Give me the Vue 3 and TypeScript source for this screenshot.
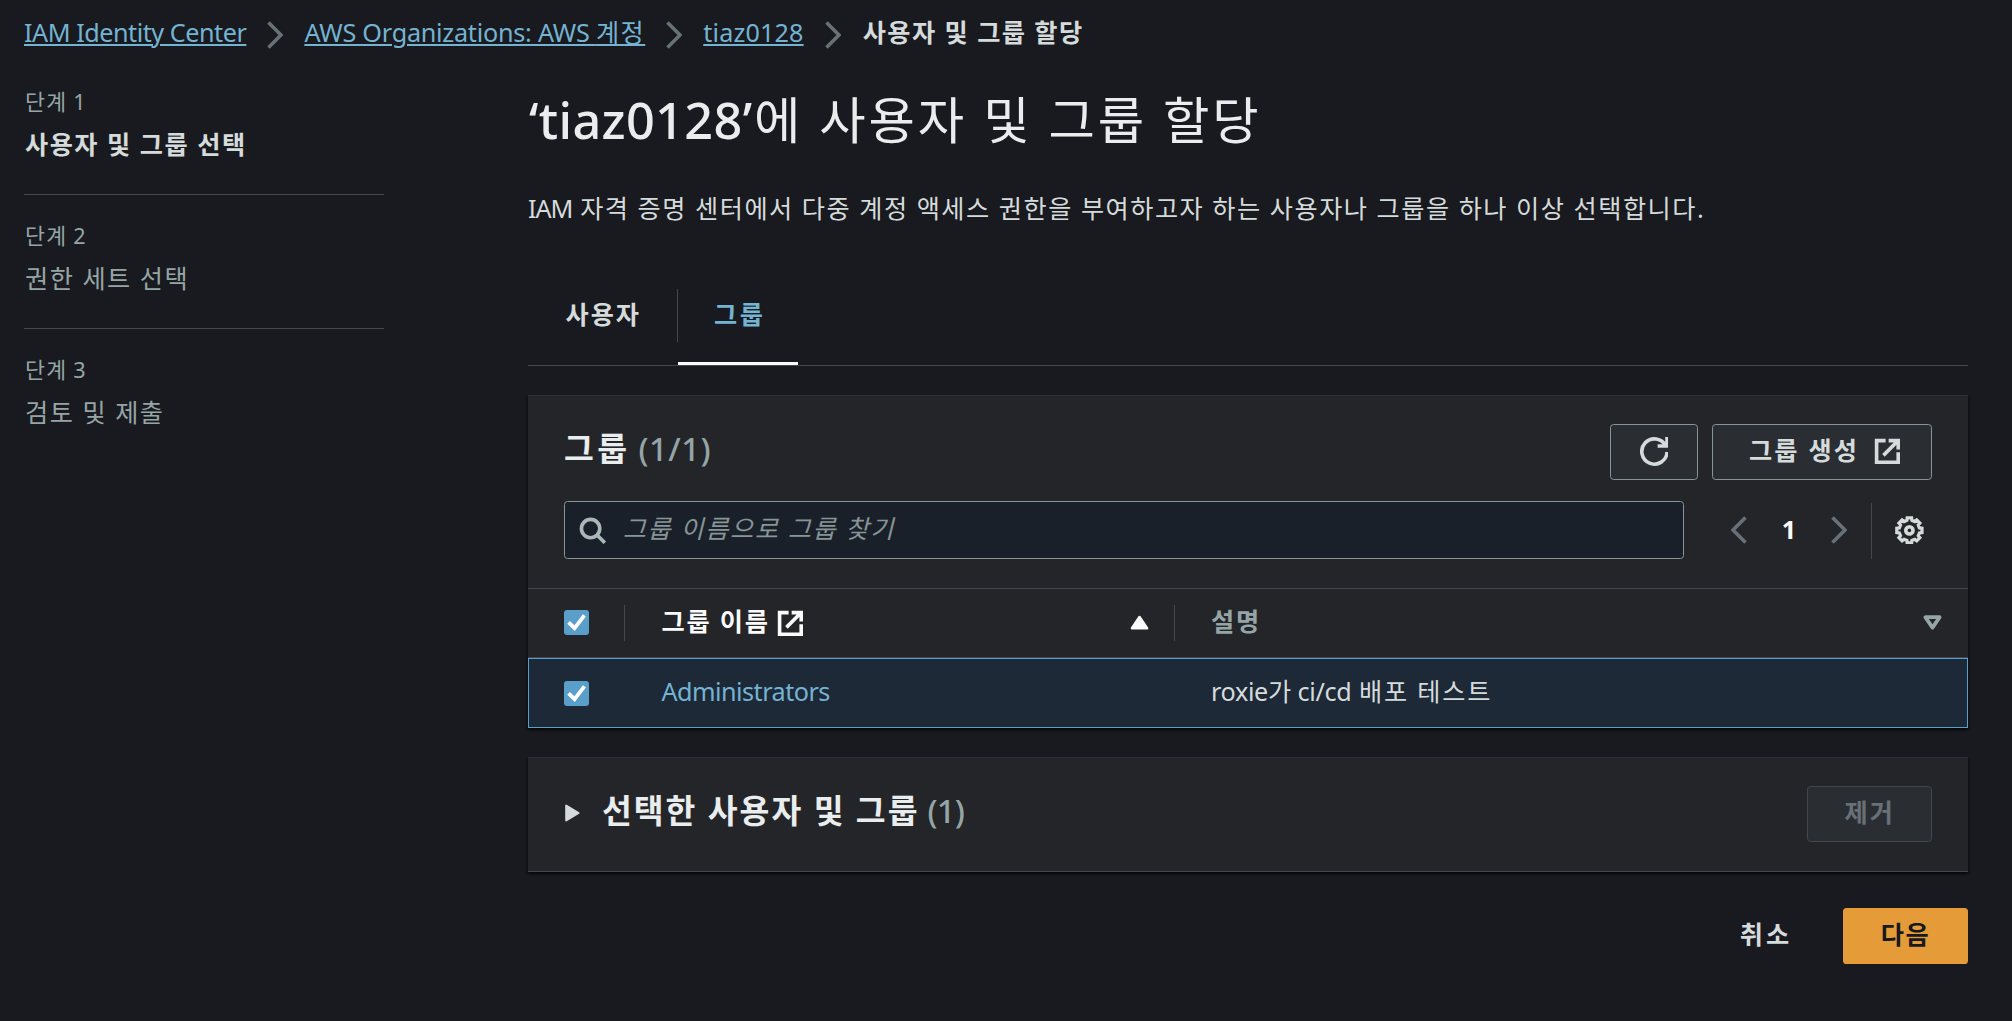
<script setup lang="ts">
import { ref } from 'vue'

interface Step {
  label: number
  name: string
}

const steps: Step[] = [
  { label: 1, name: '사용자 및 그룹 선택' },
  { label: 2, name: '권한 세트 선택' },
  { label: 3, name: '검토 및 제출' },
]
const activeStep = ref(1)
const query = ref('')

/* Outline of an eight-toothed gear on a 16-unit grid */
const gearPath = (() => {
  const points: string[] = []
  for (let i = 0; i < 8; i++) {
    const base = i * 45 - 90
    const ring: [number, number][] = [
      [-14, 5.75],
      [-10, 7.1],
      [10, 7.1],
      [14, 5.75],
    ]
    for (const [offset, radius] of ring) {
      const angle = ((base + offset) * Math.PI) / 180
      points.push(`${(8 + radius * Math.cos(angle)).toFixed(2)} ${(8 + radius * Math.sin(angle)).toFixed(2)}`)
    }
  }
  return `M${points.join('L')}Z`
})()
</script>

<template>
  <div class="page">
    <nav class="crumbs">
      <a class="link first">IAM Identity Center</a>
      <svg class="chevron" viewBox="0 0 16 28"><path d="M1.5 1.5 14 14 1.5 26.5" /></svg>
      <a class="link second">AWS Organizations: AWS <span class="ko">계정</span></a>
      <svg class="chevron" viewBox="0 0 16 28"><path d="M1.5 1.5 14 14 1.5 26.5" /></svg>
      <a class="link third">tiaz0128</a>
      <svg class="chevron" viewBox="0 0 16 28"><path d="M1.5 1.5 14 14 1.5 26.5" /></svg>
      <strong class="ko current">사용자 및 그룹 할당</strong>
    </nav>

    <div class="body">
      <aside class="steps">
        <div v-for="step in steps" :key="step.label" class="step" :class="{ active: step.label === activeStep }">
          <div class="step-label"><span class="ko">단계</span> {{ step.label }}</div>
          <div class="step-name ko">{{ step.name }}</div>
        </div>
      </aside>

      <main class="main">
        <h1><span class="account">‘tiaz0128’</span><span class="rest">에 사용자 및 그룹 할당</span></h1>
        <p class="desc"><span class="iam">IAM</span><span class="ko">자격 증명 센터에서 다중 계정 액세스 권한을 부여하고자 하는 사용자나 그룹을 하나 이상 선택합니다.</span></p>

        <div class="tabs">
          <div class="tab users"><span class="ko">사용자</span></div>
          <div class="tab groups"><span class="ko">그룹</span></div>
        </div>

        <section class="panel">
          <div class="head">
            <div class="title-row">
              <h2><span class="ko">그룹</span><span class="count">(1/1)</span></h2>
              <div class="actions">
                <button class="btn refresh">
                  <svg class="icon" viewBox="0 0 16 16"><path d="M15 8.3A7 7 0 1 1 14.3 5M15 0v5h-5.2" /></svg>
                </button>
                <button class="btn create">
                  <span class="ko">그룹 생성</span>
                  <svg class="icon" viewBox="0 0 16 16"><path d="M14 8.5V14H2V2h5M8.7 2H14v5M5.8 10.2 14 2" /></svg>
                </button>
              </div>
            </div>
            <div class="tools">
              <label class="search">
                <svg class="icon" viewBox="0 0 16 16"><circle cx="7" cy="7" r="5.1" /><path d="m10.6 10.6 4.3 4.3" /></svg>
                <input v-model="query" type="text" placeholder="그룹 이름으로 그룹 찾기" />
              </label>
              <div class="pager">
                <svg class="chevron" viewBox="0 0 16 28"><path d="M14.5 1.5 2 14l12.5 12.5" /></svg>
                <span class="num">1</span>
                <svg class="chevron" viewBox="0 0 16 28"><path d="M1.5 1.5 14 14 1.5 26.5" /></svg>
              </div>
              <div class="settings">
                <svg class="icon" viewBox="0 0 16 16"><path :d="gearPath" stroke-width="1.8" /><circle cx="8" cy="8" r="2" /></svg>
              </div>
            </div>
          </div>

          <div class="row columns">
            <div class="cell select">
              <svg class="check" viewBox="0 0 25 25"><path d="M4.6 12.4 10.6 18.2 20.4 5.4" /></svg>
            </div>
            <div class="cell name">
              <span class="ko">그룹 이름</span>
              <svg class="icon ext" viewBox="0 0 16 16"><path d="M14 8.5V14H2V2h5M8.7 2H14v5M5.8 10.2 14 2" /></svg>
              <svg class="sort up" viewBox="0 0 19 15"><path d="M9.5 2 17 13.3H2z" /></svg>
            </div>
            <div class="cell note">
              <span class="ko">설명</span>
              <svg class="sort down" viewBox="0 0 19 15"><path d="M2.4 2.2h14.2L9.5 12.6z" /></svg>
            </div>
          </div>

          <div class="row item">
            <div class="cell select">
              <svg class="check" viewBox="0 0 25 25"><path d="M4.6 12.4 10.6 18.2 20.4 5.4" /></svg>
            </div>
            <div class="cell name"><a class="group">Administrators</a></div>
            <div class="cell note"><span class="latin">roxie</span><span class="ko particle">가</span> <span class="latin">ci/cd</span> <span class="ko tail">배포 테스트</span></div>
          </div>
        </section>

        <section class="panel selected">
          <svg class="expand" viewBox="0 0 15 18"><path d="M1.2 1.6v14.8L13.6 9z" /></svg>
          <h2><span class="ko">선택한 사용자 및 그룹</span><span class="count">(1)</span></h2>
          <button class="btn remove" disabled><span class="ko">제거</span></button>
        </section>

        <footer class="footer">
          <button class="cancel"><span class="ko">취소</span></button>
          <button class="next"><span class="ko">다음</span></button>
        </footer>
      </main>
    </div>
  </div>
</template>

<style>
body {
  background: #191a1f;
}
</style>

<style scoped>
.page {
  min-height: 1021px;
  box-sizing: border-box;
  overflow: hidden;
  background: #191a1f;
  color: #d5dbdb;
  font-family: "Noto Sans", "Noto Sans CJK KR", sans-serif;
  font-size: 25.2px;
  line-height: 40px;
  white-space: nowrap;
}
.page * {
  box-sizing: border-box;
}
.ko {
  letter-spacing: 1.51px;
}
h1,
h2,
p {
  margin: 0;
}
svg {
  display: block;
  flex: none;
  fill: none;
  stroke: currentColor;
}
.icon {
  width: 28.8px;
  height: 28.8px;
  stroke-width: 2;
}
.chevron {
  width: 16px;
  height: 28px;
  color: #687078;
  stroke-width: 3.6;
}
button {
  padding: 0;
  border: 0;
  background: none;
  color: inherit;
  font: inherit;
  font-weight: 700;
}

.crumbs {
  display: flex;
  align-items: center;
  height: 61px;
  padding: 3px 24px 0;
}
.crumbs .chevron {
  margin: 5px 21px 0;
}
.link {
  color: #74b3d2;
  text-decoration: underline;
  text-decoration-thickness: 2px;
  text-underline-offset: 2px;
}
.first {
  letter-spacing: -0.47px;
}
.second {
  letter-spacing: -0.24px;
}
.third {
  letter-spacing: 0.15px;
}
.current {
  padding-left: 1px;
  letter-spacing: 1.45px;
}

.body {
  display: flex;
}
.steps {
  width: 360px;
  margin: 0 144px 0 24px;
}
.step {
  height: 134px;
  padding: 25.6px 0 0 1px;
  color: #95a5a6;
}
.step:not(:last-child) {
  border-bottom: 1px solid #44484c;
}
.step-label {
  font-size: 21.6px;
  line-height: 30px;
}
.step-label .ko {
  letter-spacing: 1.4px;
}
.step-name {
  margin-top: 7.6px;
}
.active .step-name {
  color: #d5dbdb;
  font-weight: 700;
}

.main {
  width: 1440px;
  padding-top: 28.4px;
}
h1 {
  padding-left: 1px;
  color: #eaeded;
  font-size: 50.4px;
  font-weight: 400;
  line-height: 61px;
}
.account {
  font-weight: 500;
  letter-spacing: 0.35px;
}
.rest {
  margin-left: 1.5px;
  letter-spacing: 2.93px;
}
.desc {
  margin-top: 37.6px;
}
.iam {
  margin-right: 8px;
  letter-spacing: -1.1px;
}
.tabs {
  display: flex;
  height: 77px;
  margin-top: 61px;
  border-bottom: 1px solid #44484c;
  font-weight: 700;
}
.tab {
  height: 76px;
  padding-top: 5px;
}
.users {
  width: 150px;
  height: 53px;
  padding-left: 37.5px;
  border-right: 1px solid #44484c;
}
.users .ko {
  letter-spacing: 2px;
}
.groups {
  width: 120px;
  padding-left: 36px;
  border-bottom: 3px solid #fafafa;
  color: #74b3d2;
}
.groups .ko {
  letter-spacing: 2.5px;
}

.panel {
  margin-top: 29px;
  border-top: 1px solid #2d2f34;
  background: #242529;
  box-shadow: 0 2px 2px rgba(0, 0, 0, 0.4), 2px 2px 2px rgba(0, 0, 0, 0.25), -2px 2px 2px rgba(0, 0, 0, 0.25);
}
.head {
  height: 193px;
  padding: 28px 36px 0;
  border-bottom: 1px solid #414750;
}
.title-row {
  display: flex;
  justify-content: space-between;
}
h2 {
  color: #eaeded;
  font-size: 32.4px;
  line-height: 49px;
}
h2 .ko {
  letter-spacing: 2px;
}
.title-row h2 .ko {
  letter-spacing: 3.4px;
}
.count {
  margin-left: 8px;
  color: #95a5a6;
  font-weight: 500;
  letter-spacing: 0.6px;
}
.actions {
  display: flex;
  gap: 14px;
}
.btn {
  display: flex;
  align-items: center;
  height: 56px;
  border: 1px solid #879596;
  border-radius: 3.6px;
  background: #2a2e33;
}
.refresh {
  width: 88px;
  justify-content: center;
}
.refresh .icon {
  margin-bottom: 1px;
}
.create {
  width: 220px;
  padding-left: 36px;
}
.btn .ko {
  padding-bottom: 3.6px;
}
.create .ko {
  letter-spacing: 2.2px;
}
.create .icon {
  margin: 0 0 1px 14px;
}
.tools {
  display: flex;
  height: 58px;
  margin-top: 21px;
}
.search {
  display: flex;
  align-items: center;
  width: 1120px;
  padding-left: 13px;
  border: 1px solid #879596;
  border-radius: 3.6px;
  background: #1a2029;
}
.search .icon {
  color: #aab7b8;
}
.search input {
  width: 1040px;
  height: 50px;
  margin-left: 16px;
  padding: 0 0 3.6px;
  border: 0;
  outline: 0;
  background: none;
  color: inherit;
  font: inherit;
  letter-spacing: 1.6px;
}
.search input::placeholder {
  color: #879596;
  font-style: italic;
  opacity: 1;
}
.pager {
  display: flex;
  align-items: center;
  width: 187px;
  padding-left: 47px;
}
.num {
  width: 84px;
  padding-bottom: 2px;
  color: #fafafa;
  font-weight: 700;
  text-align: center;
}
.settings {
  display: flex;
  align-items: center;
  width: 61px;
  height: 56px;
  margin-top: 2px;
  padding: 0 0 2px 23px;
  border-left: 1px solid #44484c;
}

.row {
  display: flex;
}
.columns {
  height: 69px;
  border-bottom: 1px solid #414750;
  font-weight: 700;
}
.item {
  height: 70px;
  border: 1px solid #5a9fc9;
  background: #1d2937;
}
.cell {
  display: flex;
  align-items: center;
}
.cell.select {
  width: 96px;
  padding-left: 36px;
}
.cell.name {
  width: 550px;
  padding-left: 36.5px;
}
.cell.note {
  flex: 1;
  padding-left: 36px;
}
.columns .cell {
  height: 36px;
  margin-top: 16px;
}
.columns .name,
.columns .note {
  border-left: 1px solid #44484c;
}
.columns .name {
  color: #fafafa;
}
.columns .note {
  color: #95a5a6;
}
.columns .ko {
  padding-bottom: 4px;
  letter-spacing: 1.8px;
}
.item .cell.select {
  padding-top: 1px;
  padding-left: 35px;
}
.item .name,
.item .note {
  padding-bottom: 3.6px;
}
.check {
  width: 25px;
  height: 25px;
  border-radius: 3px;
  background: #5a9fc9;
  color: #fff;
  stroke-width: 3.8;
}
.ext {
  margin-left: 6.5px;
}
.sort {
  width: 19px;
  height: 15px;
  stroke-linejoin: round;
}
.up {
  margin: 0 25px 0 auto;
  fill: currentColor;
  stroke-width: 2.6;
}
.down {
  margin: 0 26px 0 auto;
  stroke-width: 3.8;
}
.group {
  color: #74b3d2;
  letter-spacing: -0.52px;
}
.latin {
  letter-spacing: -0.35px;
}
.particle {
  margin-right: 5px;
}
.tail {
  margin-left: 7.5px;
  letter-spacing: 1.8px;
}

.selected {
  display: flex;
  height: 115px;
  padding: 28px 36px 0;
  border-bottom: 1px solid #44484c;
}
.selected h2 {
  margin-left: 22px;
}
.selected .count {
  letter-spacing: -0.7px;
}
.expand {
  width: 15px;
  height: 18px;
  margin: 18px 0 0 1px;
  fill: currentColor;
  stroke-width: 2;
  stroke-linejoin: round;
}
.remove {
  width: 125px;
  margin-left: auto;
  padding-left: 36.5px;
  border-color: #414750;
  color: #687078;
}
.remove .ko {
  letter-spacing: 2.2px;
}

.footer {
  display: flex;
  justify-content: flex-end;
  height: 56px;
  margin-top: 36px;
}
.footer button {
  height: 56px;
  padding-bottom: 3.6px;
}
.cancel {
  margin-right: 50.5px;
}
.cancel .ko {
  letter-spacing: 3.2px;
}
.next {
  width: 125px;
  border-radius: 3.6px;
  background: #e59b38;
  color: #16191f;
}
</style>
